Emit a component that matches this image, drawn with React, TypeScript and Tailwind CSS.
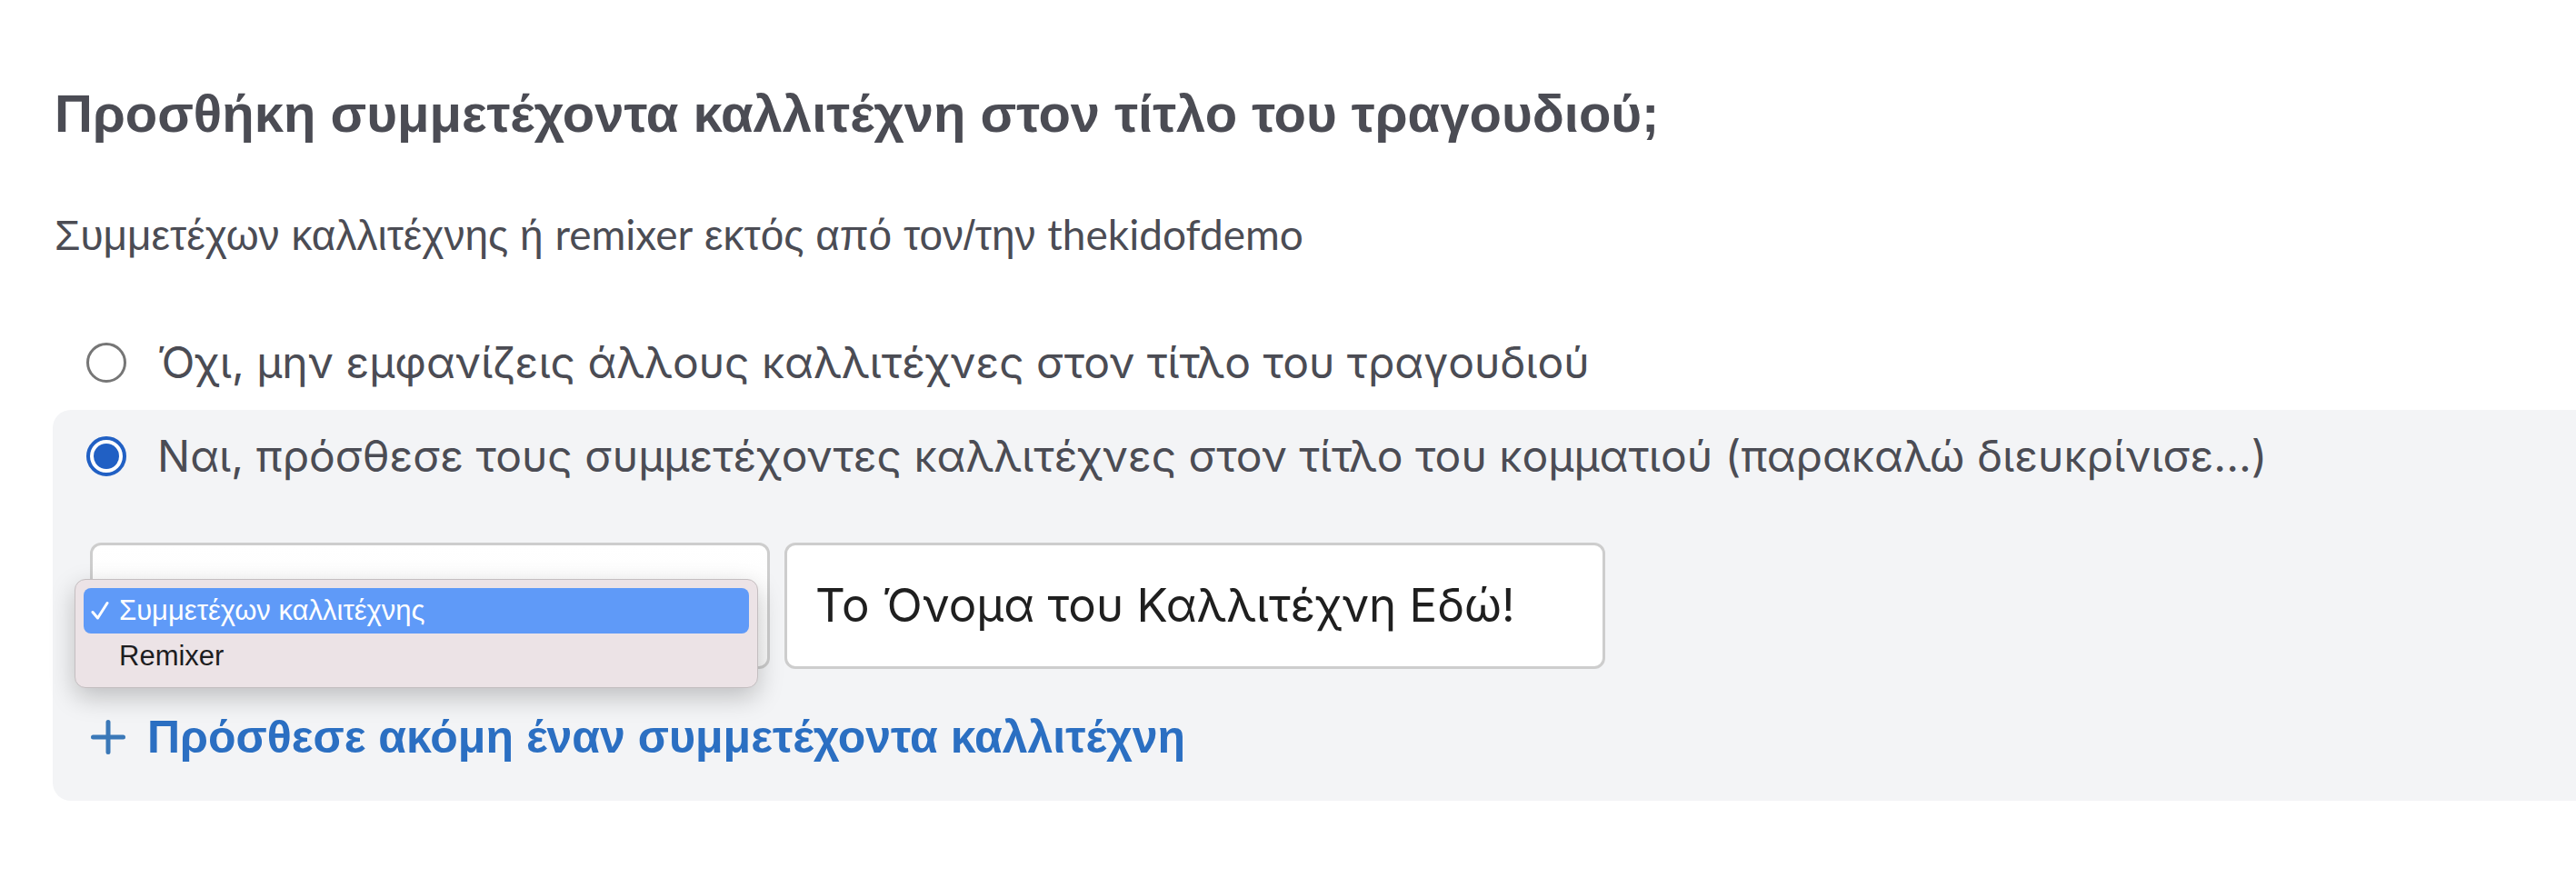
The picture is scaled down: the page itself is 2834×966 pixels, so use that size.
import React from "react";

function Radio({ checked }: { checked?: boolean }) {
  if (checked) {
    return (
      <span className="flex h-[44px] w-[44px] shrink-0 items-center justify-center rounded-full border-[4px] border-[#2160c4] bg-white">
        <span className="h-[28px] w-[28px] rounded-full bg-[#2160c4]" />
      </span>
    );
  }
  return <span className="h-[44px] w-[44px] shrink-0 rounded-full border-[3px] border-[#767676] bg-white" />;
}

function RoleMenu() {
  return (
    <div className="absolute left-[-17px] top-[40px] z-10 w-[752px] rounded-[12px] border border-[#c4bec0] bg-[#ece3e6] p-[9px] shadow-[0_10px_28px_rgba(0,0,0,0.22)]">
      <div className="flex h-[50px] items-center rounded-[8px] bg-[#5f9af8] pl-[8px] text-[31px] text-white">
        <svg width="20" height="22" viewBox="0 0 20 22" className="mr-[11px]">
          <path d="M2 12.5 L7.5 19 L18 2.5" fill="none" stroke="white" strokeWidth="3" strokeLinecap="round" strokeLinejoin="round" />
        </svg>
        Συμμετέχων καλλιτέχνης
      </div>
      <div className="flex h-[50px] items-center pl-[39px] text-[31px] text-[#1d1d1f]">Remixer</div>
    </div>
  );
}

export default function App() {
  return (
    <div className="min-h-screen overflow-hidden bg-white pl-[58px] pt-[90px] font-['Liberation_Sans',Arial,sans-serif] text-[#4b4c54]">
      <h2 className="ml-[2px] text-[58px] font-bold leading-[70px]">
        Προσθήκη συμμετέχοντα καλλιτέχνη στον τίτλο του τραγουδιού;
      </h2>

      <p className="ml-[2px] mt-[72px] text-[46px] leading-[52px]">
        Συμμετέχων καλλιτέχνης ή <span className="font-['Lato',sans-serif]">remixer</span> εκτός από τον/την{" "}
        <span className="font-['Lato',sans-serif]">thekidofdemo</span>
      </p>

      <label className="mt-[85px] flex h-[58px] items-center gap-[34px] pl-[37px] font-['Inter',sans-serif] text-[48px] leading-[58px]">
        <Radio />
        <span>Όχι, μην εμφανίζεις άλλους καλλιτέχνες στον τίτλο του τραγουδιού</span>
      </label>

      <div className="mr-[-40px] mt-[23px] rounded-[20px] bg-[#f3f4f6] pb-[41px] pl-[37px] pt-[22px]">
        <label className="flex h-[58px] items-center gap-[34px] font-['Inter',sans-serif] text-[48px] leading-[58px]">
          <Radio checked />
          <span>Ναι, πρόσθεσε τους συμμετέχοντες καλλιτέχνες στον τίτλο του κομματιού (παρακαλώ διευκρίνισε...)</span>
        </label>

        <div className="relative ml-[4px] mt-[66px] flex gap-[16px]">
          <div className="h-[139px] w-[748px] rounded-[12px] border-[3px] border-[#cdcdcd] bg-gradient-to-b from-white to-[#fafafa]" />
          <div className="flex h-[139px] w-[903px] items-center rounded-[12px] border-[3px] border-[#cdcdcd] bg-white pl-[31px] font-['Inter',sans-serif] text-[51px] text-[#1f1f1f]">
            Το Όνομα του Καλλιτέχνη Εδώ!
          </div>
          <RoleMenu />
        </div>

        <button className="ml-[5px] mt-[46px] flex h-[58px] items-center gap-[24px] text-[50px] font-bold leading-[58px] text-[#2b6fc2]">
          <svg width="38" height="38" viewBox="0 0 38 38">
            <path d="M19 2.5 V35.5 M2.5 19 H35.5" stroke="#3a78b8" strokeWidth="5" strokeLinecap="round" />
          </svg>
          Πρόσθεσε ακόμη έναν συμμετέχοντα καλλιτέχνη
        </button>
      </div>
    </div>
  );
}
